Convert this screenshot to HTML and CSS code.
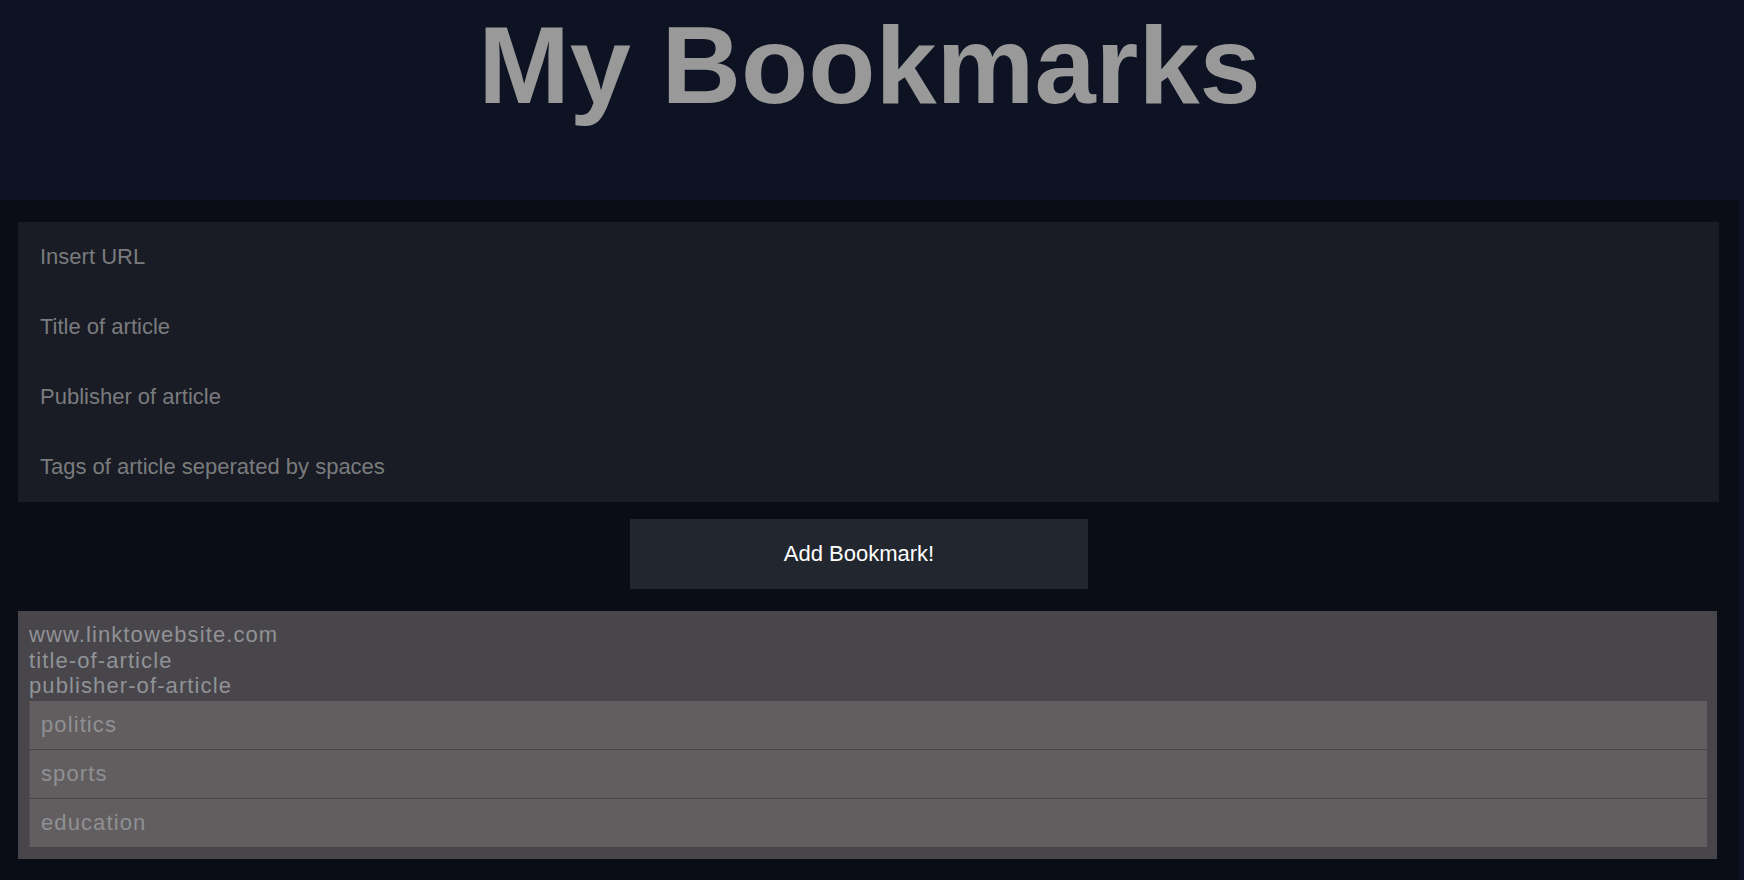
FILE: index.html
```html
<!DOCTYPE html>
<html lang="en">
<head>
<meta charset="utf-8">
<title>My Bookmarks</title>
<link rel="stylesheet" href="styles.css">
</head>
<body>
<header class="site-header">
  <h1 class="title">My Bookmarks</h1>
</header>
<main class="main">
  <form class="bookmark-form">
    <input class="field" type="text" placeholder="Insert URL">
    <input class="field" type="text" placeholder="Title of article">
    <input class="field" type="text" placeholder="Publisher of article">
    <input class="field" type="text" placeholder="Tags of article seperated by spaces">
  </form>
  <div class="actions">
    <button class="add-btn" type="button">Add Bookmark!</button>
  </div>
  <section class="card">
    <div class="card-line">www.linktowebsite.com</div>
    <div class="card-line">title-of-article</div>
    <div class="card-line">publisher-of-article</div>
    <ul class="tags">
      <li class="tag">politics</li>
      <li class="tag">sports</li>
      <li class="tag">education</li>
    </ul>
  </section>
</main>
</body>
</html>
```

FILE: styles.css
```css
html, body {
  margin: 0;
  padding: 0;
}

body {
  background: #0d1322;
  font-family: "Liberation Sans", Arial, sans-serif;
}

.site-header {
  width: calc(100% - 5px);
  height: 200px;
  box-sizing: border-box;
  padding-top: 10px;
}

.title {
  margin: 0;
  font-size: 110px;
  line-height: 1;
  font-weight: bold;
  color: #999999;
  text-align: center;
}

.main {
  width: calc(100% - 5px);
  min-height: calc(100vh - 200px);
  box-sizing: border-box;
  background: #0a0d15;
  padding: 22px 20px 21px 18px;
}

.bookmark-form {
  margin: 0;
  background: #191c24;
  display: flex;
  flex-direction: column;
}

.field {
  display: block;
  height: 70px;
  box-sizing: border-box;
  width: 100%;
  padding: 0 22px;
  margin: 0;
  border: none;
  outline: none;
  background: transparent;
  font-family: "Liberation Sans", Arial, sans-serif;
  font-size: 22px;
  color: #cccccc;
}

.field::placeholder {
  color: #7a7b7e;
  opacity: 1;
}

.actions {
  padding-top: 17px;
}

.add-btn {
  display: block;
  margin: 0 0 0 612px;
  width: 458px;
  height: 70px;
  border: none;
  background: #22272f;
  color: #ffffff;
  font-family: "Liberation Sans", Arial, sans-serif;
  font-size: 22px;
  padding: 0;
}

.card {
  margin-top: 22px;
  width: calc(100% - 2px);
  box-sizing: border-box;
  background: #48464b;
  padding: 11px 10px 12px 11px;
  color: #909296;
  font-size: 22px;
  letter-spacing: 1.1px;
}

.card-line {
  line-height: 25.5px;
}

.tags {
  list-style: none;
  margin: 2px 0 0;
  padding: 0;
}

.tag {
  height: 48px;
  display: flex;
  align-items: center;
  padding-left: 11px;
  background: #625e5f;
  border-left: 1px solid #534f52;
  border-bottom: 1px solid #48454a;
  color: #8e9094;
}

.tag:last-child {
  border-bottom: none;
}
```
